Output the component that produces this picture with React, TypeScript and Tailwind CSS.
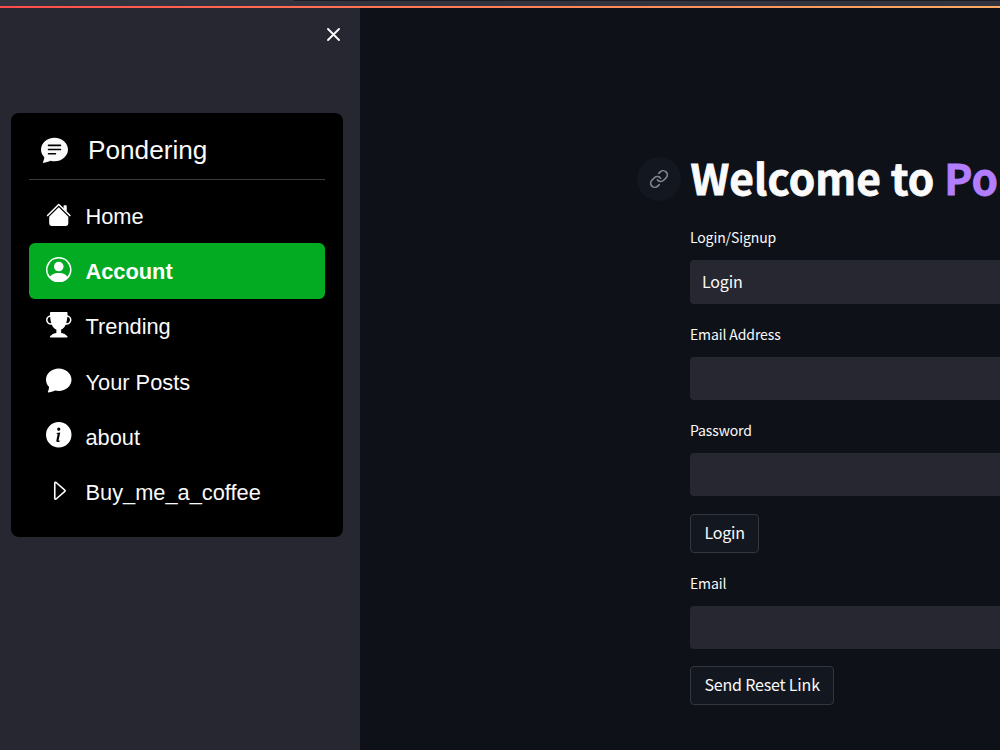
import { Link } from 'lucide-react'
import {
  BsCaretRight,
  BsChatFill,
  BsChatTextFill,
  BsInfoCircleFill,
  BsPersonCircle,
  BsTrophyFill,
} from 'react-icons/bs'

function HouseIcon() {
  return (
    <svg width="1em" height="1em" viewBox="0 0 16 16" fill="currentColor">
      <path d="m8 3.293 6 6V13.5a1.5 1.5 0 0 1-1.5 1.5h-9A1.5 1.5 0 0 1 2 13.5V9.293l6-6zm5-.793V6l-2-2V2.5a.5.5 0 0 1 .5-.5h1a.5.5 0 0 1 .5.5z" />
      <path d="M7.293 1.5a1 1 0 0 1 1.414 0l6.647 6.646a.5.5 0 0 1-.708.708L8 2.207 1.354 8.854a.5.5 0 1 1-.708-.708L7.293 1.5z" />
    </svg>
  )
}

const menu = [
  { name: 'Home', icon: HouseIcon },
  { name: 'Account', icon: BsPersonCircle, active: true },
  { name: 'Trending', icon: BsTrophyFill },
  { name: 'Your Posts', icon: BsChatFill },
  { name: 'about', icon: BsInfoCircleFill },
  { name: 'Buy_me_a_coffee', icon: BsCaretRight },
]

function Sidebar() {
  return (
    <aside className="w-[360.4px] shrink-0 bg-[#262730] pl-[11px] pr-[17.8px]">
      <div className="flex h-[105.3px] justify-end pr-[2.7px] pt-5">
        <button className="h-[13px] w-[13px] text-[#fafafa]" aria-label="Close">
          <svg viewBox="0 0 13 13" fill="none" stroke="currentColor" strokeWidth="1.9" strokeLinecap="round">
            <path d="M1 1l11 11M12 1L1 12" />
          </svg>
        </button>
      </div>
      <div className="h-[424px] rounded-lg bg-black px-[18px] font-['Liberation_Sans',sans-serif] text-[#fafafa]">
        <div className="flex h-[67px] items-center border-b border-[#3c3c3c] pl-3 pt-[7px]">
          <BsChatTextFill className="text-[27px]" />
          <span className="ml-5 pt-0.5 text-[26.2px]">Pondering</span>
        </div>
        <nav className="pt-2">
          {menu.map(({ name, icon: Icon, active }) => (
            <a
              key={name}
              href="#"
              className={
                active
                  ? 'flex h-[55.2px] items-center rounded-md bg-[#02ab21] pl-[17px] font-bold text-white'
                  : 'flex h-[55.2px] items-center pl-[17px]'
              }
            >
              <span className="-mt-[3px] text-[25.5px] text-white">
                <Icon />
              </span>
              <span className="ml-3.5 pt-[3px] text-[21.8px]">{name}</span>
            </a>
          ))}
        </nav>
      </div>
    </aside>
  )
}

function Field({ label, value }: { label: string; value?: string }) {
  return (
    <label className="block h-[96.3px]">
      <span className="flex h-[35px] items-start text-[14px] leading-6 tracking-[-0.1px]">{label}</span>
      <span className="flex h-[43.5px] items-center rounded bg-[#262730] pb-[3px] pl-3 text-base tracking-[-0.1px]">{value}</span>
    </label>
  )
}

function Button({ text }: { text: string }) {
  return (
    <button className="flex h-[39px] items-center rounded border border-[#34363d] bg-[#131720] px-[13.5px] pb-[3px] text-base tracking-[-0.17px]">
      {text}
    </button>
  )
}

export default function App() {
  return (
    <div className="flex h-screen flex-col overflow-hidden bg-[#0e1117]">
      <div className="flex h-1.5 shrink-0 justify-end bg-[#31333f]">
        <div className="h-px w-[706px] bg-[#1b1c24]" />
      </div>
      <div className="h-0.5 shrink-0 bg-linear-to-r from-[#ff4b4b] to-[#ffab64]" />
      <div className="flex min-h-0 flex-1">
        <Sidebar />
        <main className="flex-1 overflow-hidden pl-[277px] pt-[142px] font-['Noto_Sans_CJK_SC',sans-serif] text-[#fafafa]">
          <div className="flex h-[56px] items-center whitespace-nowrap">
            <span className="mr-[9px] mt-0.5 flex size-11 shrink-0 items-center justify-center rounded-full bg-[#131720]">
              <Link size={20} strokeWidth={2} className="text-[#85878c]" />
            </span>
            <h1 className="-mt-0.5 text-[42.4px] font-bold leading-none tracking-[0.1px] [-webkit-text-stroke:0.8px]">
              Welcome to <span className="text-[#b27eff]">Pondering</span>
            </h1>
          </div>
          <div className="ml-[52.5px] w-[800px] pt-[19.4px]">
            <Field label="Login/Signup" value="Login" />
            <Field label="Email Address" />
            <Field label="Password" />
            <div className="h-[56.5px]">
              <Button text="Login" />
            </div>
            <Field label="Email" />
            <div className="-mt-[0.8px]">
              <Button text="Send Reset Link" />
            </div>
          </div>
        </main>
      </div>
    </div>
  )
}
